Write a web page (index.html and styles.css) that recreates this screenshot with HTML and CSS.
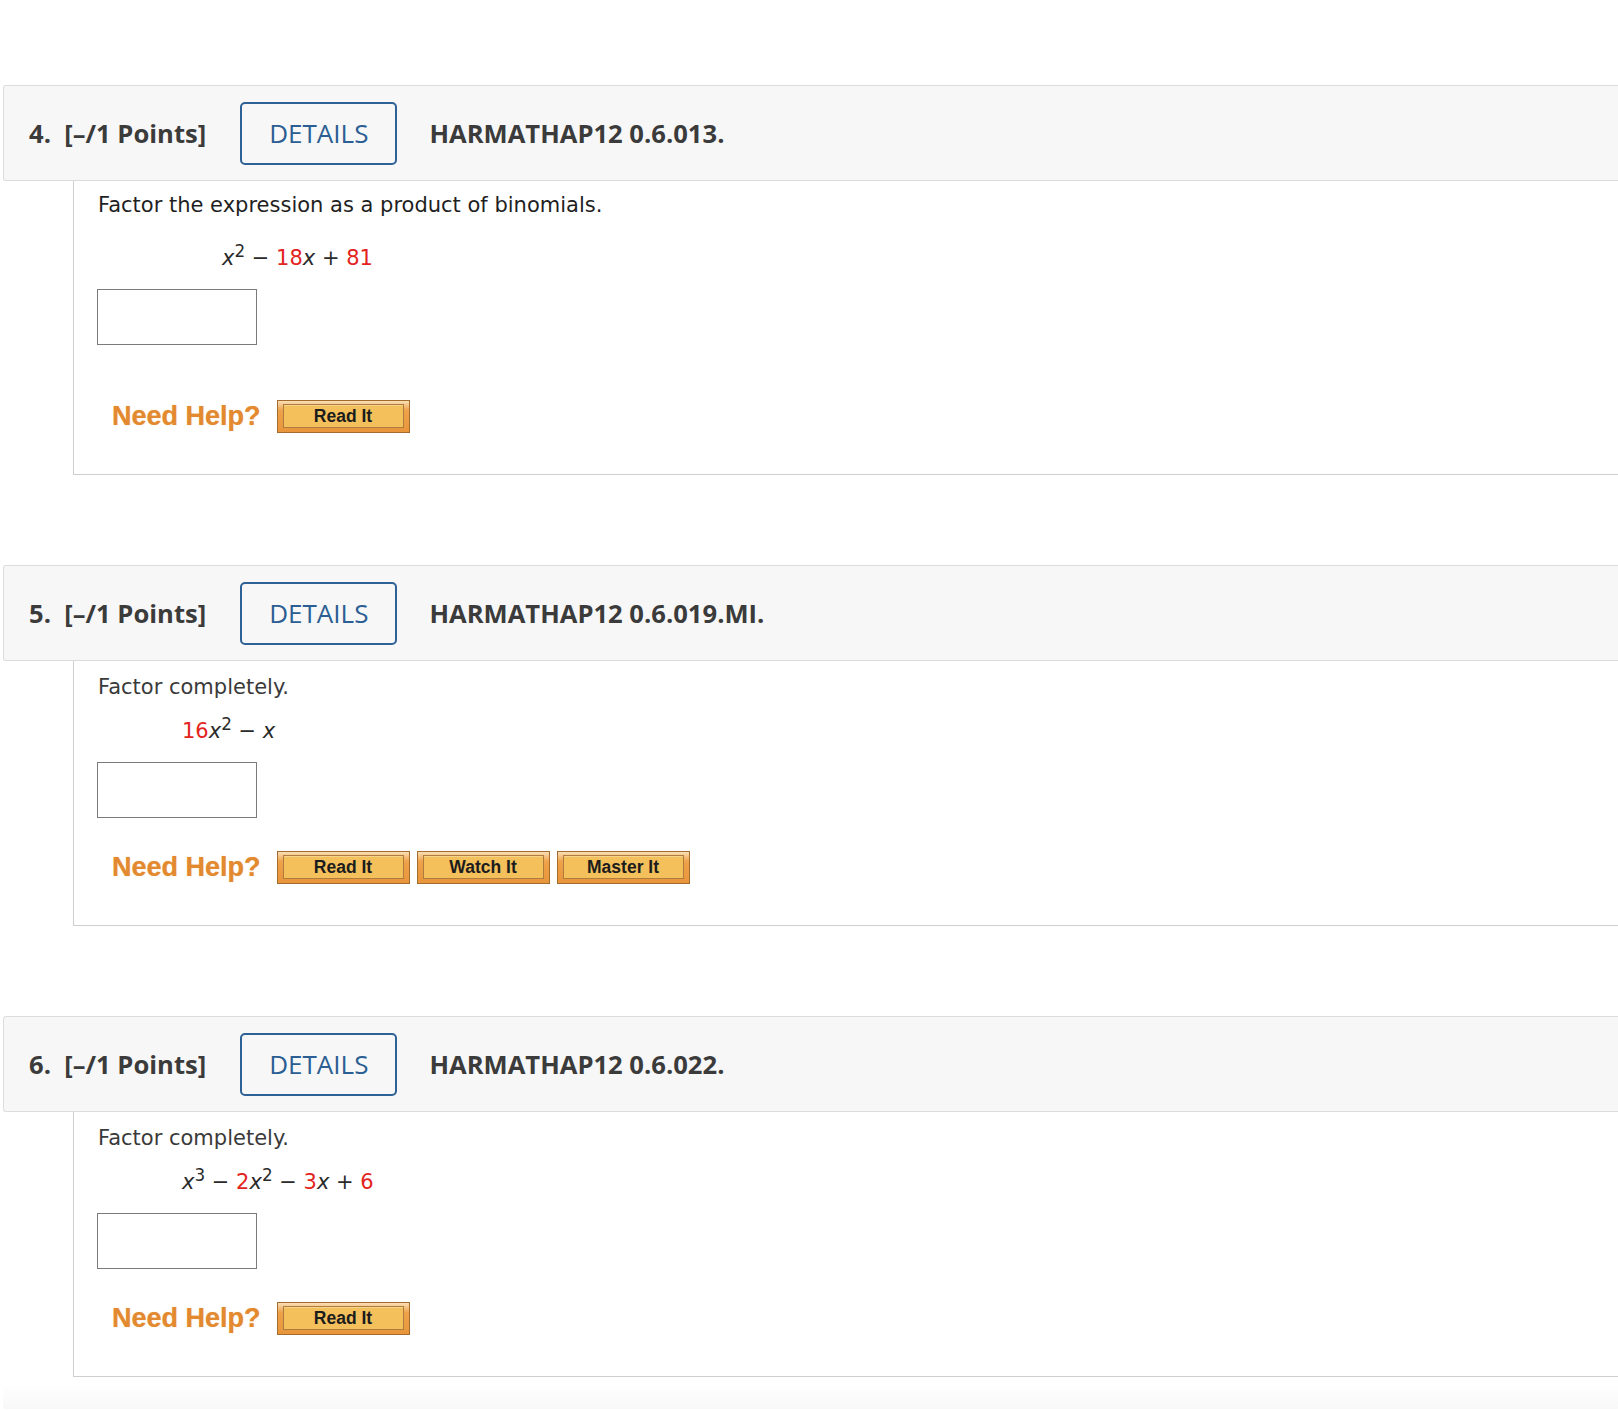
FILE: index.html
```html
<!DOCTYPE html>
<html lang="en-us">
<head>
    <meta charset="UTF-8">
    <meta name="viewport" content="width=device-width, initial-scale=1.0">
    <title>Assignment</title>
    <link rel="stylesheet" href="styles.css">
</head>
<body>
    <main class="questions">
        <div class="question">
            <div class="q-header">
                <span class="q-points">4.&nbsp; [&ndash;/1 Points]</span>
                <button class="details-btn">DETAILS</button>
                <span class="q-code">HARMATHAP12 0.6.013.</span>
            </div>
            <div class="q-body first">
                <p class="prompt dark">Factor the expression as a product of binomials.</p>
                <p class="math wide">
                    <i>x</i><sup>2</sup> &minus; <span class="red">18</span><i>x</i> + <span class="red">81</span>
                </p>
                <input class="answer" type="text">
                <div class="help loose">
                    <span class="help-label">Need Help?</span>
                    <button class="help-btn"><span>Read It</span></button>
                </div>
            </div>
        </div>

        <div class="question">
            <div class="q-header">
                <span class="q-points">5.&nbsp; [&ndash;/1 Points]</span>
                <button class="details-btn">DETAILS</button>
                <span class="q-code">HARMATHAP12 0.6.019.MI.</span>
            </div>
            <div class="q-body">
                <p class="prompt">Factor completely.</p>
                <p class="math">
                    <span class="red">16</span><i>x</i><sup>2</sup> &minus; <i>x</i>
                </p>
                <input class="answer" type="text">
                <div class="help">
                    <span class="help-label">Need Help?</span>
                    <button class="help-btn"><span>Read It</span></button>
                    <button class="help-btn"><span>Watch It</span></button>
                    <button class="help-btn"><span>Master It</span></button>
                </div>
            </div>
        </div>

        <div class="question">
            <div class="q-header">
                <span class="q-points">6.&nbsp; [&ndash;/1 Points]</span>
                <button class="details-btn">DETAILS</button>
                <span class="q-code">HARMATHAP12 0.6.022.</span>
            </div>
            <div class="q-body">
                <p class="prompt">Factor completely.</p>
                <p class="math">
                    <i>x</i><sup>3</sup> &minus; <span class="red">2</span><i>x</i><sup>2</sup> &minus; <span class="red">3</span><i>x</i> + <span class="red">6</span>
                </p>
                <input class="answer" type="text">
                <div class="help">
                    <span class="help-label">Need Help?</span>
                    <button class="help-btn"><span>Read It</span></button>
                </div>
            </div>
        </div>

        <div class="page-end"></div>
    </main>
</body>
</html>
```

FILE: styles.css
```css
html, body {
    margin: 0;
    overflow: hidden;
    background: #fff;
}

.questions {
    padding: 85px 0 0 3px;
}

.question + .question {
    margin-top: 90px;
}

.q-header {
    display: flex;
    align-items: center;
    box-sizing: border-box;
    height: 96px;
    padding-left: 25px;
    background-color: #f7f7f7;
    border: 1px solid #dcdcdc;
    border-right: none;
    border-radius: 3px 0 0 3px;
    font-family: "Open Sans", sans-serif;
    font-size: 25.6px;
    color: #3b3b3b;
}

.q-points,
.q-code {
    font-weight: 700;
}

.details-btn {
    box-sizing: border-box;
    height: 63px;
    margin: 0 32px 0 34px;
    padding: 0 27px;
    background: transparent;
    border: 2px solid #2e6196;
    border-radius: 5px;
    font-family: "Open Sans", sans-serif;
    font-size: 26px;
    color: #2b5e92;
}

.q-body {
    margin-left: 70px;
    padding: 14px 0 41px 24px;
    border-left: 1px solid #cfcfcf;
    border-bottom: 1px solid #cfcfcf;
    font-family: "DejaVu Sans", Verdana, sans-serif;
    font-size: 21px;
    line-height: 24px;
    color: #3a3a3a;
}

.q-body.first {
    padding-top: 12px;
}

.prompt {
    margin: 0;
}

.prompt.dark {
    color: #1f1f1f;
}

.math {
    margin: 20px 0 19px 84px;
    color: #2a2a2a;
}

.math.wide {
    margin-top: 29px;
    margin-left: 124px;
}

.math sup {
    font-size: 0.8em;
    line-height: 0;
    vertical-align: 0.45em;
}

.red {
    color: #e3241d;
}

.answer {
    display: block;
    box-sizing: border-box;
    width: 160px;
    height: 56px;
    margin: 0 0 0 -1px;
    border: 1px solid #7b7b7b;
    background: #fff;
}

.help {
    display: flex;
    align-items: center;
    gap: 7px;
    margin: 33px 0 0 14px;
}

.help.loose {
    margin-top: 55px;
}

.help-label {
    margin-right: 9px;
    font-family: "Liberation Sans", Arial, sans-serif;
    font-weight: 700;
    font-size: 27px;
    line-height: 33px;
    color: #e3892f;
    text-shadow: 0 0 1px rgba(227, 137, 47, 0.6);
}

.help-btn {
    box-sizing: border-box;
    width: 133px;
    height: 33px;
    padding: 3px 5px 4px;
    border: 1px solid #a46c2c;
    background: linear-gradient(#fadfb6 0%, #eea24a 30%, #e8953b 100%);
    cursor: pointer;
}

.help-btn span {
    display: flex;
    align-items: center;
    justify-content: center;
    height: 100%;
    box-sizing: border-box;
    border: 1px solid #ae7c3c;
    background-color: #f3c05c;
    box-shadow: inset 0 1px 0 #f7d48c;
    font-family: "Liberation Sans", Arial, sans-serif;
    font-weight: 700;
    font-size: 17.5px;
    color: #1c1c1c;
}

.page-end {
    height: 26px;
    margin-top: 6px;
    background: linear-gradient(to bottom, #fff, #f8f8f8);
}
```
